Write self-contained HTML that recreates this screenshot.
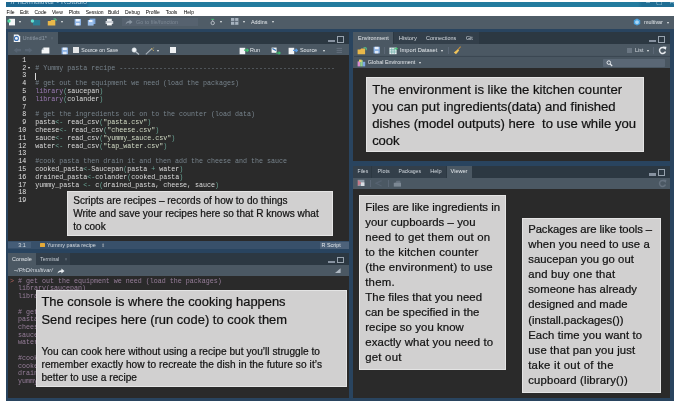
<!DOCTYPE html>
<html lang="en">
<head>
<meta charset="utf-8">
<title>RStudio – cooking analogy</title>
<style>
*{box-sizing:border-box;margin:0;padding:0}
html,body{width:680px;height:407px;background:#fff;overflow:hidden}
body{position:relative;font-family:"Liberation Sans",sans-serif;color:#e6e6e6}
.abs,.abs *{position:absolute}
#win{position:absolute;left:6px;top:2px;width:668px;height:399px;background:#29445f;overflow:hidden;filter:blur(.4px)}
#win div,#win span,#win svg{position:absolute}
/* chrome */
#title{left:0;top:0;width:668px;height:5.4px;background:linear-gradient(90deg,#1d6790 0,#1d6790 80px,#227b9e 84px,#227b9e 632px,#1f6e94 636px);overflow:hidden}
#title span{top:-4px;font-size:7.3px;line-height:7px;color:#d9ecf5;opacity:.75;white-space:nowrap}
#menu{left:0;top:5.4px;width:668px;height:9px;background:#fff}
#menu span{top:1.7px;font-size:5px;line-height:7px;color:#000;white-space:nowrap}
#tbar{left:0;top:14px;width:668px;height:12.6px;background:#4f5c67}
.ui{font-size:5.4px;line-height:7px;color:#e4e8ec;white-space:nowrap}
.tabrow{background:#2c3842}
.tab{background:#333f4a}
.tab.on{background:#4b5863}
.tool{background:#4b5863}
.tool2{background:#495661}
.dark{background:#2a2a2a}
.dd{width:0;height:0;border-left:1.6px solid transparent;border-right:1.6px solid transparent;border-top:2px solid #e6e9ec}
.sep{width:.6px;background:#5b6775}
/* code */
.code{font-family:"Liberation Mono",monospace;font-size:6.667px;line-height:7.8px;white-space:pre;color:#dcdcdc}
.code i{font-style:normal;color:#77838c}
.code b{font-weight:normal;color:#9a7bb3}
.code u{text-decoration:none;color:#69a595}
.code s{text-decoration:none;color:#d3dcc6}
.ln{font-family:"Liberation Mono",monospace;font-size:6.667px;line-height:7.8px;white-space:pre;color:#e2e2e2;text-align:right}
.con em{font-style:normal;color:#b9655c}
.con{font-family:"Liberation Mono",monospace;font-size:6.667px;line-height:7.72px;white-space:pre;color:#977e9a}
/* note boxes */
.note{background:#d1d0d0;color:#111;border:.5px solid #e4e4e4;white-space:nowrap}
.note p{position:absolute;left:0;white-space:nowrap;-webkit-text-stroke:.22px #151515}
</style>
</head>
<body>
<div id="win">
  <div id="title"><span style="left:.5px">~/PhD/multivar - RStudio</span><span style="left:640px;letter-spacing:6px">–▢✕</span></div>
  <div id="menu">
    <span style="left:.5px">File</span><span style="left:14px">Edit</span><span style="left:28.5px">Code</span><span style="left:46px">View</span><span style="left:62.7px">Plots</span><span style="left:79.7px">Session</span><span style="left:102px">Build</span><span style="left:119px">Debug</span><span style="left:139.7px">Profile</span><span style="left:159.7px">Tools</span><span style="left:177.7px">Help</span>
  </div>
  <div id="tbar"></div>

  <!-- LEFT: source pane -->
  <div class="tool2" style="left:2px;top:238.50px;width:340.5px;height:8.10px;background:#38506a" id="status"></div>
  <div class="dark" style="left:2px;top:52.30px;width:340.5px;height:187.20px" id="editor"></div>
  <div class="tool" style="left:2px;top:41.30px;width:340.5px;height:12.00px"></div>
  <div class="tabrow" style="left:2px;top:30.00px;width:340.5px;height:12.30px"></div>
  <div class="tab on" style="left:2px;top:30px;width:50px;height:12.3px"></div>
  <!-- LEFT: console pane -->
  <div class="dark" style="left:2px;top:273.00px;width:340.5px;height:123.2px" id="console"></div>
  <div class="tool" style="left:2px;top:262.00px;width:340.5px;height:12.00px"></div>
  <div class="tabrow" style="left:2px;top:251.00px;width:340.5px;height:12.00px"></div>
  <div class="tab on" style="left:2px;top:251px;width:28px;height:12px"></div>
  <div class="tab" style="left:30.3px;top:251px;width:34px;height:12px"></div>
  <!-- RIGHT: environment pane -->
  <div class="dark" style="left:347.2px;top:64.60px;width:316.8px;height:94.20px"></div>
  <div class="tool2" style="left:347.2px;top:52.30px;width:316.8px;height:13.30px"></div>
  <div class="tool" style="left:347.2px;top:40.80px;width:316.8px;height:12.50px"></div>
  <div class="tabrow" style="left:347.2px;top:30.20px;width:316.8px;height:11.60px"></div>
  <div class="tab on" style="left:347.2px;top:30.2px;width:40.2px;height:11.6px"></div>
  <div class="tab" style="left:388px;top:30.2px;width:27px;height:11.6px"></div>
  <div class="tab" style="left:415.3px;top:30.2px;width:39.7px;height:11.6px"></div>
  <div class="tab" style="left:455.3px;top:30.2px;width:17.7px;height:11.6px"></div>
  <!-- RIGHT: viewer pane -->
  <div class="dark" style="left:347.2px;top:185.70px;width:316.8px;height:210.30px"></div>
  <div class="tool" style="left:347.2px;top:174.50px;width:316.8px;height:12.20px"></div>
  <div class="tabrow" style="left:347.2px;top:163.50px;width:316.8px;height:12.00px"></div>
  <div class="tab" style="left:347.2px;top:163.5px;width:18.2px;height:12px"></div>
  <div class="tab" style="left:366px;top:163.5px;width:20.7px;height:12px"></div>
  <div class="tab" style="left:387px;top:163.5px;width:31.7px;height:12px"></div>
  <div class="tab" style="left:419px;top:163.5px;width:21.2px;height:12px"></div>
  <div class="tab on" style="left:440.5px;top:163.5px;width:25px;height:12px"></div>

  <!-- chrome left -->
  <div style="left:2.3px;top:239.8px;width:23px;height:6.5px;background:#455d77"></div>
  <svg style="left:1.00px;top:16.00px" width="9" height="8" viewBox="0 0 9 8"><rect x="2" y="0.8" width="6" height="6.6" fill="#f4f6f8"/><circle cx="2" cy="3" r="1.7" fill="#4fd6a0"/></svg>
  <div class="dd" style="left:13.20px;top:19.30px"></div>
  <svg style="left:23.50px;top:16.00px" width="11" height="8" viewBox="0 0 11 8"><rect x="3" y="2" width="7.2" height="5.4" fill="#2b7f96"/><circle cx="2.4" cy="3" r="1.7" fill="#62e2d2"/></svg>
  <svg style="left:41.00px;top:16.00px" width="10" height="8" viewBox="0 0 10 8"><path d="M.8 3 L3.5 3 L4.3 2 L8.3 2 L8.3 7.4 L.8 7.4 Z" fill="#e9b84a"/><path d="M6.5 1 L9 1 L9 3" stroke="#58c98a" stroke-width="1" fill="none"/></svg>
  <div class="dd" style="left:55.40px;top:19.30px"></div>
  <svg style="left:67.50px;top:16.00px" width="8" height="8" viewBox="0 0 8 8"><rect x=".6" y="1" width="6.4" height="6.4" fill="#8db4e6"/><rect x="1.8" y="1" width="4" height="2.4" fill="#e9f1fb"/><rect x="2" y="5" width="3.6" height="2.4" fill="#dfe9f7"/></svg>
  <svg style="left:80.50px;top:16.00px" width="10" height="8" viewBox="0 0 10 8"><rect x="2.6" y=".6" width="5.8" height="5.4" fill="#7fa8dc"/><rect x=".8" y="2" width="5.8" height="5.6" fill="#9cc0ec"/><rect x="2" y="2" width="3.4" height="2" fill="#eef4fc"/></svg>
  <svg style="left:98.50px;top:16.00px" width="9" height="8" viewBox="0 0 9 8"><rect x="2" y=".8" width="4.8" height="2.4" fill="#f0f2f4"/><rect x=".6" y="3" width="7.6" height="3" fill="#c9ced4"/><rect x="2" y="5" width="4.8" height="2.4" fill="#f6f7f8"/></svg>
  <div style="left:116.00px;top:16.40px;width:76.00px;height:8.00px;background:#56626f"></div>
  <svg style="left:119.00px;top:17.30px" width="8" height="6" viewBox="0 0 8 6"><path d="M.5 5.5 C1 3 2.5 2 4.5 2 L4.5 .5 L7.5 3 L4.5 5.4 L4.5 3.8 C3 3.8 1.6 4.2 .5 5.5Z" fill="#8a96a2"/></svg>
  <span class="ui" style="left:130.00px;top:16.90px;color:#7d8995">Go to file/function</span>
  <svg style="left:202.50px;top:16.00px" width="8" height="8" viewBox="0 0 8 8"><rect x="2.2" y=".8" width="3" height="1" fill="#3fbf6f"/><circle cx="3.7" cy="5" r="1.7" fill="none" stroke="#c5ccd3" stroke-width=".8"/><path d="M3.7 1.8V3.3" stroke="#c5ccd3" stroke-width=".7"/></svg>
  <div class="dd" style="left:214.40px;top:19.30px"></div>
  <svg style="left:225.00px;top:16.40px" width="8" height="7" viewBox="0 0 8 7"><rect x="0" y="0" width="7.4" height="6.8" fill="#a7b3bf"/><path d="M3.7 0V6.8M0 3.4H7.4" stroke="#55616e" stroke-width=".9"/></svg>
  <div class="dd" style="left:236.70px;top:19.30px"></div>
  <span class="ui" style="left:245.00px;top:16.90px;">Addins</span>
  <div class="dd" style="left:265.90px;top:19.30px"></div>
  <svg style="left:626.50px;top:16.00px" width="8" height="8" viewBox="0 0 8 8"><path d="M4 .6 L7.2 2.3 L7.2 5.9 L4 7.6 L.8 5.9 L.8 2.3Z" fill="#4aa3e0"/><path d="M4 2.2 L5.8 3.2 L5.8 5.2 L4 6.2 L2.2 5.2 L2.2 3.2Z" fill="#a9d6f5"/></svg>
  <span class="ui" style="left:638.00px;top:16.90px;">multivar</span>
  <div class="dd" style="left:660.90px;top:19.50px"></div>
  <svg style="left:6.50px;top:31.50px" width="8" height="8.5" viewBox="0 0 8 8.5"><path d="M.8 .4 H5.2 L7.2 2.4 V8 H.8Z" fill="#f3f5f7"/><circle cx="3.4" cy="4.4" r="2" fill="none" stroke="#3b73b9" stroke-width="1.1"/></svg>
  <span class="ui" style="left:16.40px;top:33.00px;color:#8e9aa6;font-size:5.7px">Untitled1*</span>
  <span class="ui" style="left:44.50px;top:33.10px;color:#5f6b78;font-size:5px">×</span>
  <div style="left:321.50px;top:37.90px;width:7.30px;height:2.60px;background:#8792a0"></div>
  <div style="left:331.00px;top:34.00px;width:7.20px;height:6.60px;border:.7px solid #98a3ae;border-top-width:1.6px"></div>
  <svg style="left:6.50px;top:45.00px" width="9" height="6.5" viewBox="0 0 9 6.5"><path d="M4.2 .4 L.6 3.2 L4.2 6 V4.3 H8 V2.1 H4.2Z" fill="#586573"/></svg>
  <svg style="left:17.50px;top:45.00px" width="9" height="6.5" viewBox="0 0 9 6.5"><path d="M4.8 .4 L8.4 3.2 L4.8 6 V4.3 H1 V2.1 H4.8Z" fill="#586573"/></svg>
  <svg style="left:34.50px;top:44.80px" width="9" height="7" viewBox="0 0 9 7"><path d="M2.6 .4 H8.4 V6.6 H.6 V3Z" fill="#f2f4f6"/><path d="M.6 3 L2.6 .4 V3Z" fill="#aab4be"/></svg>
  <svg style="left:54.50px;top:44.50px" width="8" height="8" viewBox="0 0 8 8"><rect x=".6" y=".6" width="6.4" height="6.6" fill="#8db4e6"/><rect x="1.8" y=".6" width="4" height="2.4" fill="#e9f1fb"/><rect x="2" y="4.8" width="3.6" height="2.4" fill="#dfe9f7"/></svg>
  <div style="left:67.30px;top:45.20px;width:5.90px;height:6.00px;background:#e3e5e7"></div>
  <span class="ui" style="left:75.30px;top:44.80px;font-size:5.2px">Source on Save</span>
  <svg style="left:124.50px;top:44.50px" width="9" height="8" viewBox="0 0 9 8"><circle cx="3.2" cy="3" r="2.2" fill="#f0f3f6" stroke="#cfd6dd" stroke-width=".6"/><path d="M4.8 4.8 L8 7.4" stroke="#b7c0c9" stroke-width="1.3"/></svg>
  <svg style="left:138.50px;top:44.50px" width="10" height="8" viewBox="0 0 10 8"><path d="M.8 7.4 L6.6 1.8" stroke="#aab3bd" stroke-width="1.1"/><path d="M6.2 1 L7.4 2.6 M8.6 .6 L7.8 1.6 M7.8 3.2 L9 3.6" stroke="#e6c36a" stroke-width=".7"/></svg>
  <div class="dd" style="left:150.70px;top:47.80px"></div>
  <div style="left:163.70px;top:44.80px;width:6.70px;height:6.40px;background:#eef0f2"></div>
  <svg style="left:232.50px;top:44.50px" width="10" height="8" viewBox="0 0 10 8"><rect x=".6" y=".8" width="5.6" height="6.4" fill="#f2f4f6"/><path d="M5 3.2 H9.2 M7.6 1.6 L9.4 3.2 L7.6 4.8" stroke="#3fbf6f" stroke-width="1.2" fill="none"/></svg>
  <span class="ui" style="left:244.00px;top:44.80px;">Run</span>
  <svg style="left:264.50px;top:44.50px" width="10" height="8" viewBox="0 0 10 8"><rect x=".6" y=".6" width="5" height="5.2" fill="#f2f4f6"/><path d="M1.4 1.6 L5 3.6" stroke="#2f6fb3" stroke-width="1.2"/><path d="M5 6 H9 M7.6 4.6 L9.2 6 L7.6 7.4" stroke="#3fbf6f" stroke-width="1.1" fill="none"/></svg>
  <svg style="left:282.00px;top:44.50px" width="10" height="8" viewBox="0 0 10 8"><rect x=".6" y=".8" width="5.6" height="6.4" fill="#f2f4f6"/><path d="M5 3.4 H9.2 M7.6 1.8 L9.4 3.4 L7.6 5" stroke="#5b9be0" stroke-width="1.2" fill="none"/></svg>
  <span class="ui" style="left:294.00px;top:44.80px;">Source</span>
  <div class="dd" style="left:317.10px;top:47.80px"></div>
  <svg style="left:329.50px;top:44.80px" width="7" height="7" viewBox="0 0 7 7"><path d="M.6 1.4H6 M.6 3.4H6 M.6 5.4H6" stroke="#66727f" stroke-width=".9"/></svg>
  <span class="ui" style="left:12.30px;top:239.60px;color:#d7dce1">3:1</span>
  <div style="left:33.80px;top:240.90px;width:4.80px;height:4.40px;background:#e2a93a;border-radius:.6px"></div>
  <span class="ui" style="left:41.00px;top:239.60px;color:#d7dce1">Yummy pasta recipe</span>
  <span class="ui" style="left:94.50px;top:239.60px;color:#8b97a3;font-size:4.5px">⬍</span>
  <div style="left:314.00px;top:239.50px;width:29.00px;height:7.00px;background:#4d627a"></div>
  <span class="ui" style="left:315.50px;top:239.60px;color:#e2e6ea">R Script</span>
  <span class="ui" style="left:6.00px;top:253.50px;">Console</span>
  <span class="ui" style="left:34.30px;top:253.50px;color:#c5ccd3;font-size:5.0px">Terminal</span>
  <span class="ui" style="left:58.50px;top:253.60px;color:#6b7784;font-size:5px">×</span>
  <div style="left:321.50px;top:258.60px;width:7.30px;height:2.60px;background:#8792a0"></div>
  <div style="left:331.00px;top:254.70px;width:7.20px;height:6.60px;border:.7px solid #98a3ae;border-top-width:1.6px"></div>
  <span class="ui" style="left:7.80px;top:265.10px;color:#d5dae0;font-style:italic;font-size:5.7px">~/PhD/multivar/</span>
  <svg style="left:50.50px;top:265.50px" width="8" height="6" viewBox="0 0 8 6"><path d="M.5 5.6 C1 3.2 2.4 2.2 4.4 2.2 L4.4 .6 L7.5 3.1 L4.4 5.6 L4.4 4 C2.9 4 1.6 4.4 .5 5.6Z" fill="#e8ecf0"/></svg>
  <svg style="left:328.00px;top:265.00px" width="8" height="7" viewBox="0 0 8 7"><path d="M1 6 L6.6 1.2 L6.6 6Z" fill="#aeb8c2"/></svg>
  <!-- chrome right -->
  <span class="ui" style="left:352.00px;top:32.90px;font-size:5.5px">Environment</span>
  <span class="ui" style="left:392.80px;top:32.90px;color:#d4dae0;font-size:5.8px">History</span>
  <span class="ui" style="left:420.00px;top:32.90px;color:#d4dae0;font-size:5.45px">Connections</span>
  <span class="ui" style="left:459.90px;top:32.90px;color:#d4dae0">Git</span>
  <div style="left:642.50px;top:37.90px;width:7.30px;height:2.60px;background:#8792a0"></div>
  <div style="left:652.00px;top:34.00px;width:7.20px;height:6.60px;border:.7px solid #98a3ae;border-top-width:1.6px"></div>
  <svg style="left:351.00px;top:44.60px" width="10" height="8" viewBox="0 0 10 8"><path d="M.6 2.6 L3.3 2.6 L4.1 1.6 L8.1 1.6 L8.1 7.2 L.6 7.2 Z" fill="#e9b84a"/><path d="M6.5 .8 L9.2 .8 L9.2 3.2" stroke="#58c98a" stroke-width="1" fill="none"/></svg>
  <svg style="left:366.50px;top:44.40px" width="8" height="8" viewBox="0 0 8 8"><rect x=".6" y=".8" width="6.2" height="6.6" fill="#8db4e6"/><rect x="1.8" y=".8" width="3.8" height="2.4" fill="#e9f1fb"/><rect x="2" y="5" width="3.4" height="2.4" fill="#dfe9f7"/></svg>
  <div style="left:378.40px;top:44.80px;width:0.60px;height:7.50px;background:#5b6775"></div>
  <svg style="left:382.80px;top:44.60px" width="9" height="8" viewBox="0 0 9 8"><rect x=".4" y=".6" width="7.2" height="6.6" fill="#eef1f4"/><path d="M.4 2.8H7.6M.4 5H7.6M2.8 .6V7.2M5.2 .6V7.2" stroke="#5fa7a0" stroke-width=".7"/><path d="M5.4 1.6 H8.4 M7.2 .4 L8.6 1.6 L7.2 2.8" stroke="#3fbf6f" stroke-width=".9" fill="none"/></svg>
  <span class="ui" style="left:394.00px;top:44.90px;font-size:5.7px">Import Dataset</span>
  <div class="dd" style="left:434.70px;top:47.80px"></div>
  <div style="left:442.30px;top:44.80px;width:0.60px;height:7.50px;background:#5b6775"></div>
  <svg style="left:446.50px;top:44.20px" width="9" height="9" viewBox="0 0 9 9"><path d="M7.6 .6 L4.6 4" stroke="#c9913a" stroke-width="1.1"/><path d="M4.9 3.2 L6.2 4.6 L3 8.2 L.8 6.4Z" fill="#f0c35a"/></svg>
  <div style="left:620.70px;top:45.80px;width:5.3px;height:5.4px;background:#6a7682"></div>
  <span class="ui" style="left:629.00px;top:44.90px;color:#d4dae0">List</span>
  <div class="dd" style="left:640.70px;top:47.80px"></div>
  <div style="left:646.60px;top:44.80px;width:0.60px;height:7.50px;background:#5b6775"></div>
  <svg style="left:651.50px;top:44.20px" width="9" height="9" viewBox="0 0 9 9"><path d="M6.9 2.6 A3 3 0 1 0 7.4 5.4" fill="none" stroke="#e8ecf0" stroke-width="1.5"/><path d="M5 .4 L8.4 .8 L7.8 4Z" fill="#e8ecf0"/></svg>
  <div style="left:348.00px;top:53.80px;width:316.00px;height:0.60px;background:#3b4752"></div>
  <svg style="left:351.00px;top:56.50px" width="9" height="8" viewBox="0 0 9 8"><rect x=".6" y="2.4" width="2.6" height="5" fill="#d98fd0"/><rect x="3.2" y="1.2" width="2.6" height="6.2" fill="#8fd08f"/><rect x="5.8" y="2.8" width="2.4" height="4.6" fill="#7fa8e6"/><rect x="2" y=".6" width="2.6" height="2.4" fill="#e8d06a"/></svg>
  <span class="ui" style="left:361.80px;top:57.00px;">Global Environment</span>
  <div class="dd" style="left:413.10px;top:59.90px"></div>
  <div style="left:596.50px;top:56.90px;width:62.00px;height:8.20px;background:#5a6775;border-radius:.8px"></div>
  <svg style="left:599.50px;top:57.90px" width="7" height="7" viewBox="0 0 7 7"><circle cx="2.8" cy="2.6" r="1.8" fill="none" stroke="#e8ecf0" stroke-width="1"/><path d="M4.2 4 L6.2 6" stroke="#e8ecf0" stroke-width="1.1"/></svg>
  <span class="ui" style="left:351.60px;top:166.20px;color:#d4dae0;font-size:5.0px">Files</span>
  <span class="ui" style="left:371.60px;top:166.20px;color:#d4dae0">Plots</span>
  <span class="ui" style="left:392.60px;top:166.20px;color:#d4dae0;font-size:5.1px">Packages</span>
  <span class="ui" style="left:424.20px;top:166.20px;color:#d4dae0;font-size:5.6px">Help</span>
  <span class="ui" style="left:444.60px;top:166.20px;font-size:5.55px">Viewer</span>
  <div style="left:642.50px;top:171.10px;width:7.30px;height:2.60px;background:#8792a0"></div>
  <div style="left:652.00px;top:167.20px;width:7.20px;height:6.60px;border:.7px solid #98a3ae;border-top-width:1.6px"></div>
  <svg style="left:351.00px;top:177.40px" width="9" height="8" viewBox="0 0 9 8"><rect x=".8" y=".8" width="6.6" height="6.2" fill="#8d99a5"/><path d="M.8 .8 L4.4 4 L.8 7Z" fill="#c77a8a"/><rect x="4" y="3.4" width="3.4" height="3.6" fill="#d9dee3"/></svg>
  <div style="left:364.30px;top:177.60px;width:0.60px;height:7.40px;background:#5b6775"></div>
  <svg style="left:368.50px;top:178.00px" width="8" height="7" viewBox="0 0 8 7"><path d="M6.6 .6 L1 3.3 L6.6 6" fill="none" stroke="#566270" stroke-width="1.3"/></svg>
  <div style="left:382.00px;top:177.60px;width:0.60px;height:7.40px;background:#5b6775"></div>
  <svg style="left:386.50px;top:177.60px" width="9" height="8" viewBox="0 0 9 8"><path d="M2.2 2.8 L3.6 .8 H7.4 V4" fill="#66727f"/><rect x=".8" y="2.8" width="7.2" height="3.8" fill="#7c8894"/></svg>
  <svg style="left:651.50px;top:177.00px" width="9" height="9" viewBox="0 0 9 9"><path d="M6.9 2.6 A3 3 0 1 0 7.4 5.4" fill="none" stroke="#66727f" stroke-width="1.5"/><path d="M5 .4 L8.4 .8 L7.8 4Z" fill="#66727f"/></svg>
  <!-- editor text -->
  <div class="ln" style="left:2px;top:54.70px;width:18.3px">1</div>
  <div class="ln" style="left:2px;top:62.50px;width:18.3px">2</div>
  <div class="code" style="left:29.3px;top:62.50px"><i># Yummy pasta recipe ------------------------------------------------------</i></div>
  <div class="ln" style="left:2px;top:70.30px;width:18.3px">3</div>
  <div class="ln" style="left:2px;top:78.10px;width:18.3px">4</div>
  <div class="code" style="left:29.3px;top:78.10px"><i># get out the equipment we need (load the packages)</i></div>
  <div class="ln" style="left:2px;top:85.90px;width:18.3px">5</div>
  <div class="code" style="left:29.3px;top:85.90px"><b>library</b><u>(</u>saucepan<u>)</u></div>
  <div class="ln" style="left:2px;top:93.70px;width:18.3px">6</div>
  <div class="code" style="left:29.3px;top:93.70px"><b>library</b><u>(</u>colander<u>)</u></div>
  <div class="ln" style="left:2px;top:101.50px;width:18.3px">7</div>
  <div class="ln" style="left:2px;top:109.30px;width:18.3px">8</div>
  <div class="code" style="left:29.3px;top:109.30px"><i># get the ingredients out on to the counter (load data)</i></div>
  <div class="ln" style="left:2px;top:117.10px;width:18.3px">9</div>
  <div class="code" style="left:29.3px;top:117.10px">pasta<u>&lt;-</u> read_csv<u>(</u><s>"pasta.csv"</s><u>)</u></div>
  <div class="ln" style="left:2px;top:124.90px;width:18.3px">10</div>
  <div class="code" style="left:29.3px;top:124.90px">cheese<u>&lt;-</u> read_csv<u>(</u><s>"cheese.csv"</s><u>)</u></div>
  <div class="ln" style="left:2px;top:132.70px;width:18.3px">11</div>
  <div class="code" style="left:29.3px;top:132.70px">sauce<u>&lt;-</u> read_csv<u>(</u><s>"yummy_sauce.csv"</s><u>)</u></div>
  <div class="ln" style="left:2px;top:140.50px;width:18.3px">12</div>
  <div class="code" style="left:29.3px;top:140.50px">water<u>&lt;-</u> read_csv<u>(</u><s>"tap_water.csv"</s><u>)</u></div>
  <div class="ln" style="left:2px;top:148.30px;width:18.3px">13</div>
  <div class="ln" style="left:2px;top:156.10px;width:18.3px">14</div>
  <div class="code" style="left:29.3px;top:156.10px"><i>#cook pasta then drain it and then add the cheese and the sauce</i></div>
  <div class="ln" style="left:2px;top:163.90px;width:18.3px">15</div>
  <div class="code" style="left:29.3px;top:163.90px">cooked_pasta<u>&lt;-</u>Saucepan<u>(</u>pasta <u>+</u> water<u>)</u></div>
  <div class="ln" style="left:2px;top:171.70px;width:18.3px">16</div>
  <div class="code" style="left:29.3px;top:171.70px">drained_pasta<u>&lt;-</u>colander<u>(</u>cooked_pasta<u>)</u></div>
  <div class="ln" style="left:2px;top:179.50px;width:18.3px">17</div>
  <div class="code" style="left:29.3px;top:179.50px">yummy_pasta <u>&lt;-</u> c<u>(</u>drained_pasta, cheese, sauce<u>)</u></div>
  <div class="ln" style="left:2px;top:187.30px;width:18.3px">18</div>
  <div class="ln" style="left:2px;top:195.10px;width:18.3px">19</div>
  <div style="left:22.4px;top:64.50px" class="dd" id="fold"></div>
  <div style="left:29.4px;top:71.30px;width:.7px;height:6.6px;background:#d8d8d8"></div>
  <!-- console text -->
  <div class="con" style="left:4px;top:275.64px"><em>&gt;</em> # get out the equipment we need (load the packages)</div>
  <div class="con" style="left:4px;top:283.36px">  library(saucepan)</div>
  <div class="con" style="left:4px;top:291.08px">  library(colander)</div>
  <div class="con" style="left:4px;top:306.52px">  # get the ingredients out on to the counter (load data)</div>
  <div class="con" style="left:4px;top:314.24px">  pasta&lt;- read_csv("pasta.csv")</div>
  <div class="con" style="left:4px;top:321.96px">  cheese&lt;- read_csv("cheese.csv")</div>
  <div class="con" style="left:4px;top:329.68px">  sauce&lt;- read_csv("yummy_sauce.csv")</div>
  <div class="con" style="left:4px;top:337.40px">  water&lt;- read_csv("tap_water.csv")</div>
  <div class="con" style="left:4px;top:352.84px">  #cook pasta then drain it and then add the cheese and the sauce</div>
  <div class="con" style="left:4px;top:360.56px">  cooked_pasta&lt;-Saucepan(pasta + water)</div>
  <div class="con" style="left:4px;top:368.28px">  drained_pasta&lt;-colander(cooked_pasta)</div>
  <div class="con" style="left:4px;top:376.00px">  yummy_pasta &lt;- c(drained_pasta, cheese, sauce)</div>
  <!-- notes -->
  <div class="note" id="n-scripts" style="left:61.00px;top:188.75px;width:265.70px;height:44.75px">
  <p style="left:5.20px;top:3.49px;font-size:10.05px;line-height:12.06px;letter-spacing:-0.012px">Scripts are recipes – records of how to do things</p>
  <p style="left:5.20px;top:16.64px;font-size:10.05px;line-height:12.06px">Write and save your recipes here so that R knows what</p>
  <p style="left:5.20px;top:29.74px;font-size:10.05px;line-height:12.06px;letter-spacing:0.016px">to cook</p>
  </div>
  <div class="note" id="n-env" style="left:360.25px;top:75.00px;width:277.50px;height:74.80px">
  <p style="left:4.95px;top:4.00px;font-size:13.1px;line-height:15.72px;letter-spacing:0.023px">The environment is like the kitchen counter</p>
  <p style="left:4.95px;top:20.90px;font-size:13.1px;line-height:15.72px;letter-spacing:-0.012px">you can put ingredients(data) and finished</p>
  <p style="left:4.95px;top:37.90px;font-size:13.1px;line-height:15.72px;letter-spacing:0.009px">dishes (model outputs) here&nbsp; to use while you</p>
  <p style="left:4.95px;top:55.00px;font-size:13.1px;line-height:15.72px;letter-spacing:-0.124px">cook</p>
  </div>
  <div class="note" id="n-files" style="left:353.00px;top:192.50px;width:147.00px;height:175.80px">
  <p style="left:5.20px;top:5.11px;font-size:11.4px;line-height:13.68px">Files are like ingredients in</p>
  <p style="left:5.20px;top:20.19px;font-size:11.4px;line-height:13.68px;letter-spacing:0.045px">your cupboards – you</p>
  <p style="left:5.20px;top:35.27px;font-size:11.4px;line-height:13.68px;letter-spacing:0.208px">need to get them out on</p>
  <p style="left:5.20px;top:50.35px;font-size:11.4px;line-height:13.68px;letter-spacing:0.202px">to the kitchen counter</p>
  <p style="left:5.20px;top:65.43px;font-size:11.4px;line-height:13.68px;letter-spacing:0.171px">(the environment) to use</p>
  <p style="left:5.20px;top:80.51px;font-size:11.4px;line-height:13.68px;letter-spacing:0.247px">them.</p>
  <p style="left:5.20px;top:95.59px;font-size:11.4px;line-height:13.68px;letter-spacing:0.075px">The files that you need</p>
  <p style="left:5.20px;top:110.67px;font-size:11.4px;line-height:13.68px;letter-spacing:0.037px">can be specified in the</p>
  <p style="left:5.20px;top:125.75px;font-size:11.4px;line-height:13.68px;letter-spacing:0.068px">recipe so you know</p>
  <p style="left:5.20px;top:140.83px;font-size:11.4px;line-height:13.68px;letter-spacing:0.110px">exactly what you need to</p>
  <p style="left:5.20px;top:155.91px;font-size:11.4px;line-height:13.68px;letter-spacing:0.231px">get out</p>
  </div>
  <div class="note" id="n-pkg" style="left:516.00px;top:215.50px;width:138.75px;height:175.00px">
  <p style="left:5.20px;top:4.30px;font-size:11.3px;line-height:13.56px;letter-spacing:-0.068px">Packages are like tools –</p>
  <p style="left:5.20px;top:19.43px;font-size:11.3px;line-height:13.56px;letter-spacing:0.072px">when you need to use a</p>
  <p style="left:5.20px;top:34.56px;font-size:11.3px;line-height:13.56px;letter-spacing:0.046px">saucepan you go out</p>
  <p style="left:5.20px;top:49.69px;font-size:11.3px;line-height:13.56px;letter-spacing:0.187px">and buy one that</p>
  <p style="left:5.20px;top:64.82px;font-size:11.3px;line-height:13.56px;letter-spacing:0.039px">someone has already</p>
  <p style="left:5.20px;top:79.95px;font-size:11.3px;line-height:13.56px;letter-spacing:0.014px">designed and made</p>
  <p style="left:5.20px;top:95.08px;font-size:11.3px;line-height:13.56px;letter-spacing:-0.011px">(install.packages())</p>
  <p style="left:5.20px;top:110.21px;font-size:11.3px;line-height:13.56px;letter-spacing:0.141px">Each time you want to</p>
  <p style="left:5.20px;top:125.34px;font-size:11.3px;line-height:13.56px;letter-spacing:0.136px">use that pan you just</p>
  <p style="left:5.20px;top:140.47px;font-size:11.3px;line-height:13.56px;letter-spacing:0.285px">take it out of the</p>
  <p style="left:5.20px;top:155.60px;font-size:11.3px;line-height:13.56px;letter-spacing:0.180px">cupboard (library())</p>
  </div>
  <div class="note" id="n-con" style="left:29.75px;top:287.60px;width:311.05px;height:97.40px">
  <p style="left:4.70px;top:3.69px;font-size:12.9px;line-height:15.48px;letter-spacing:-0.008px">The console is where the cooking happens</p>
  <p style="left:4.70px;top:20.99px;font-size:12.9px;line-height:15.48px;letter-spacing:0.031px">Send recipes here (run code) to cook them</p>
  <p style="left:4.70px;top:55.04px;font-size:10.15px;line-height:12.18px;letter-spacing:0.023px">You can cook here without using a recipe but you’ll struggle to</p>
  <p style="left:4.70px;top:68.19px;font-size:10.15px;line-height:12.18px;letter-spacing:0.071px">remember exactly how to recreate the dish in the future so it’s</p>
  <p style="left:4.70px;top:81.09px;font-size:10.15px;line-height:12.18px;letter-spacing:0.019px">better to use a recipe</p>
  </div>
</div>
</body>
</html>
